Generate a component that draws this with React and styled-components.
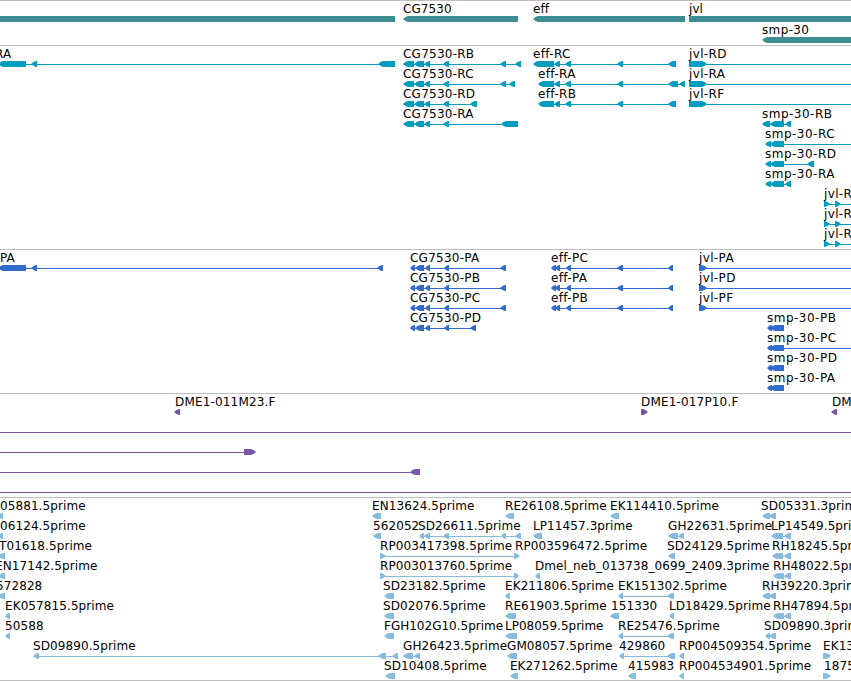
import React from "react"
import styled, { createGlobalStyle } from "styled-components"

const GlobalStyle = createGlobalStyle`
  body {
    margin: 0;
    background: #fff;
    overflow: hidden;
  }
`

const Browser = styled.div`
  width: 851px;
  height: 681px;
  overflow: hidden;
  display: flex;
  flex-direction: column;
  font-family: "DejaVu Sans", Verdana, sans-serif;
  font-size: 12px;
  line-height: 14px;
  color: #000;
  border-top: 1px solid #bebebe;
  box-sizing: border-box;
`

const Track = styled.section`
  flex: none;
  display: flex;
  flex-direction: column;
  padding-bottom: ${(p) => p.$pad}px;
  border-bottom: 1px solid #bebebe;
  color: ${(p) => p.$color};
`

const Row = styled.div`
  position: relative;
  height: ${(p) => p.$height}px;
`

const Label = styled.span`
  position: absolute;
  top: 1px;
  white-space: pre;
  color: #000;
`

const Glyphs = styled.svg`
  display: block;
  width: 851px;
  height: 6px;
  padding-top: 15px;
  fill: currentColor;
`

const left = (label, x, blocks, opts) => ({ label, x, blocks, dir: -1, ...opts })
const right = (label, x, blocks, opts) => ({ label, x, blocks, dir: 1, ...opts })

const cgTail = [[403, 414], [414, 424], [424, 430], [443, 449]]
const cgpTail = [[410, 415], [415, 424], [425, 430], [444, 449]]
const effMid = [[554, 560], [565, 571], [617, 623]]
const effP = [[551, 556], [555, 560], [566, 571], [617, 623], [668, 673]]
const toEdge = { to: 860 }

const tracks = [
  {
    name: "genes",
    color: "#3d8d93",
    rowHeight: 21,
    pad: 2,
    rows: [
      [
        left("", 0, [[-10, 395]]),
        left("CG7530", 403, [[403, 518]]),
        left("eff", 533, [[533, 685]]),
        right("jvl", 689, [[689, 870]]),
      ],
      [left("smp-30", 762, [[762, 870]])],
    ],
  },
  {
    name: "transcripts",
    color: "#009dbf",
    rowHeight: 20,
    pad: 3,
    rows: [
      [
        left("RA", -5, [[-2, 26], [31, 37], [378, 395]]),
        left("CG7530-RB", 403, [...cgTail, [500, 506], [515, 521]]),
        left("eff-RC", 533, [[533, 554], ...effMid, [668, 676]]),
        right("jvl-RD", 689, [[689, 707]], toEdge),
      ],
      [
        left("CG7530-RC", 403, [...cgTail, [500, 506], [509, 515]]),
        left("eff-RA", 538, [[538, 554], ...effMid, [668, 678], [679, 685]]),
        right("jvl-RA", 689, [[689, 707]], toEdge),
      ],
      [
        left("CG7530-RD", 403, [...cgTail, [470, 477]]),
        left("eff-RB", 538, [[538, 554], ...effMid, [668, 676]]),
        right("jvl-RF", 689, [[689, 707]], toEdge),
      ],
      [
        left("CG7530-RA", 403, [...cgTail, [501, 518]]),
        left("smp-30-RB", 762, [[762, 770], [770, 784], [785, 791]]),
      ],
      [left("smp-30-RC", 765, [[765, 771], [770, 784]], toEdge)],
      [left("smp-30-RD", 765, [[765, 771], [770, 784], [807, 814]])],
      [left("smp-30-RA", 765, [[765, 771], [770, 784], [785, 791]])],
      [right("jvl-RE", 824, [[824, 830], [835, 841]], toEdge)],
      [right("jvl-RB", 824, [[824, 830], [835, 841]], toEdge)],
      [right("jvl-RC", 824, [[824, 830], [835, 841]], toEdge)],
    ],
  },
  {
    name: "proteins",
    color: "#316ccc",
    rowHeight: 20,
    pad: 3,
    rows: [
      [
        left("PA", 0, [[-2, 26], [31, 37], [377, 383]]),
        left("CG7530-PA", 410, [...cgpTail, [500, 506]]),
        left("eff-PC", 551, effP),
        right("jvl-PA", 699, [[699, 707]], toEdge),
      ],
      [
        left("CG7530-PB", 410, [...cgpTail, [500, 506]]),
        left("eff-PA", 551, effP),
        right("jvl-PD", 699, [[699, 707]], toEdge),
      ],
      [
        left("CG7530-PC", 410, [...cgpTail, [500, 506]]),
        left("eff-PB", 551, effP),
        right("jvl-PF", 699, [[699, 707]], toEdge),
      ],
      [
        left("CG7530-PD", 410, [...cgpTail, [470, 476]]),
        left("smp-30-PB", 767, [[767, 772], [770, 784]]),
      ],
      [left("smp-30-PC", 767, [[767, 772], [770, 784]], toEdge)],
      [left("smp-30-PD", 767, [[767, 772], [770, 784]])],
      [left("smp-30-PA", 767, [[767, 772], [770, 784]])],
    ],
  },
  {
    name: "BACs",
    color: "#7658a8",
    rowHeight: 20,
    pad: 3,
    rows: [
      [
        left("DME1-011M23.F", 175, [[174, 180]]),
        right("DME1-017P10.F", 641, [[641, 648]]),
        left("DME1", 832, [[831, 837]]),
      ],
      [right("", 0, [], { from: -5, to: 860 })],
      [right("", 0, [[244, 256]], { from: -5 })],
      [left("", 0, [[410, 420]], { from: -5 })],
      [right("", 0, [], { from: -5, to: 860 })],
    ],
  },
  {
    name: "ESTs",
    color: "#86bbdc",
    rowHeight: 20,
    pad: 2,
    rows: [
      [
        left("05881.5prime", 0, [[-3, 3]]),
        left("EN13624.5prime", 372, [[372, 381]]),
        left("RE26108.5prime", 505, [[505, 514]]),
        left("EK114410.5prime", 610, [[610, 619]]),
        left("SD05331.3prime", 761, [[762, 770], [769, 776]]),
      ],
      [
        left("06124.5prime", 0, [[-3, 3]]),
        left("562052", 373, [[373, 381]]),
        left("SD26611.5prime", 418, [[419, 424], [424, 430], [443, 449], [501, 506], [515, 521]]),
        left("LP11457.3prime", 533, [[533, 542]]),
        left("GH22631.5prime", 668, [[668, 678], [678, 684]]),
        left("LP14549.5prime", 771, [[771, 783], [784, 791]]),
      ],
      [
        left("T01618.5prime", -1, [[-2, 5]]),
        right("RP003417398.5prime", 380, [[380, 386], [514, 520]]),
        right("RP003596472.5prime", 515, []),
        left("SD24129.5prime", 667, [[668, 675]]),
        left("RH18245.5prime", 772, [[772, 783], [784, 791]]),
      ],
      [
        left("EN17142.5prime", -5, [[-2, 5]]),
        right("RP003013760.5prime", 380, [[380, 386], [514, 519]]),
        left("Dmel_neb_013738_0699_2409.3prime", 535, [[535, 540]]),
        left("RH48022.5prime", 773, [[773, 784], [784, 791]]),
      ],
      [
        left("572828", -4, [[-2, 5]]),
        left("SD23182.5prime", 383, [[384, 394]]),
        left("EK211806.5prime", 505, [[505, 510]]),
        left("EK151302.5prime", 618, [[618, 623], [667, 674]]),
        left("RH39220.3prime", 762, [[762, 770], [769, 776]]),
      ],
      [
        left("EK057815.5prime", 5, [[5, 10]]),
        left("SD02076.5prime", 383, [[384, 394]]),
        left("RE61903.5prime", 505, [[505, 516]]),
        left("151330", 611, [[610, 619]]),
        left("LD18429.5prime", 669, [[669, 674]]),
        left("RH47894.5prime", 773, [[773, 784], [784, 791]]),
      ],
      [
        left("50588", 5, [[5, 10]]),
        left("FGH102G10.5prime", 384, [[384, 394]], { spacing: 0 }),
        left("LP08059.5prime", 505, [[505, 517]], { spacing: 0 }),
        left("RE25476.5prime", 618, [[618, 623], [667, 674]]),
        left("SD09890.3prime", 764, [[765, 770], [769, 776]]),
      ],
      [
        left("SD09890.5prime", 33, [[33, 39], [378, 386], [392, 398]]),
        left("GH26423.5prime", 403, [[403, 413], [414, 420]]),
        left("GM08057.5prime", 507, [[507, 517]]),
        left("429860", 619, [[619, 624], [667, 675]]),
        left("RP004509354.5prime", 679, [[679, 684]]),
        right("EK13", 823, [[823, 831]]),
      ],
      [
        left("SD10408.5prime", 384, [[385, 395]]),
        left("EK271262.5prime", 510, [[510, 518]], { spacing: 0 }),
        left("415983", 628, [[628, 636]]),
        left("RP004534901.5prime", 679, [[679, 684]]),
        right("1875", 824, [[823, 831]]),
      ],
    ],
  },
]

const tracking = ({ label, spacing }) => {
  if (spacing !== undefined) return spacing
  if (!label.length) return 0
  const extra = (label.split("-").length - 1) * 2.2
  return extra ? extra / label.length : 0.09
}

// a block is a bar whose pointing end is rounded off to an arrow head
const blockPoints = ([s, e], dir) => {
  const head = Math.min(5, e - s - 1)
  const tip = dir < 0 ? s : e
  const back = dir < 0 ? e : s
  const at = (d) => tip - dir * d
  return [
    [tip, 3],
    [at(head * 0.5), 1],
    [at(head), 0],
    [back, 0],
    [back, 6],
    [at(head), 6],
    [at(head * 0.5), 5],
  ]
    .map((p) => p.join(","))
    .join(" ")
}

function Feature({ f }) {
  const ends = f.blocks.flat()
  const from = f.from ?? ends[0]
  const to = f.to ?? ends[ends.length - 1]
  return (
    <g>
      {to > from && <rect x={from + 1} y={3} width={to - from - 2} height={1} />}
      {f.blocks.map((b) => (
        <polygon key={b[0]} points={blockPoints(b, f.dir)} />
      ))}
    </g>
  )
}

function App() {
  return (
    <Browser>
      <GlobalStyle />
      {tracks.map((t) => (
        <Track key={t.name} $color={t.color} $pad={t.pad}>
          {t.rows.map((row, i) => (
            <Row key={i} $height={t.rowHeight}>
              {row.map((f, j) => (
                <Label key={j} style={{ left: f.x, letterSpacing: tracking(f) }}>
                  {f.label}
                </Label>
              ))}
              <Glyphs>
                {row.map((f, j) => (
                  <Feature key={j} f={f} />
                ))}
              </Glyphs>
            </Row>
          ))}
        </Track>
      ))}
    </Browser>
  )
}

export default App
